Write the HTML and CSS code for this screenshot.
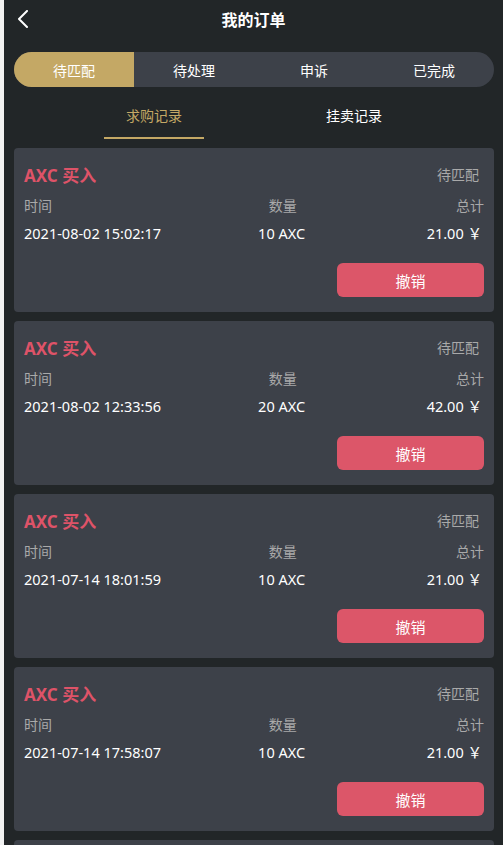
FILE: index.html
```html
<!DOCTYPE html>
<html lang="zh-CN">
<head>
    <meta charset="UTF-8">
    <meta name="viewport" content="width=device-width, initial-scale=1.0">
    <title>我的订单</title>
    <link rel="stylesheet" href="styles.css">
</head>
<body>
    <div class="app">
        <div class="nav-bar">
            <svg class="back-icon" width="12" height="18" viewBox="0 0 12 18">
                <path d="M10 1 L2 9 L10 17" fill="none" stroke="#fff" stroke-width="2" stroke-linecap="round" stroke-linejoin="round"/>
            </svg>
            <h1>我的订单</h1>
        </div>

        <div class="main">
            <div class="status-tabs">
                <div class="status-tab active">待匹配</div>
                <div class="status-tab">待处理</div>
                <div class="status-tab">申诉</div>
                <div class="status-tab">已完成</div>
            </div>

            <div class="sub-tabs">
                <div class="sub-tab active">
                    <span>求购记录</span>
                    <div class="line"></div>
                </div>
                <div class="sub-tab">
                    <span>挂卖记录</span>
                    <div class="line"></div>
                </div>
            </div>

            <div class="order-list">
                <div class="order-card">
                    <div class="order-head">
                        <span class="order-title">AXC 买入</span>
                        <span class="order-status">待匹配</span>
                    </div>
                    <div class="order-row labels">
                        <span class="col-time">时间</span>
                        <span class="col-num">数量</span>
                        <span class="col-total">总计</span>
                    </div>
                    <div class="order-row values">
                        <span class="col-time">2021-08-02 15:02:17</span>
                        <span class="col-num">10 AXC</span>
                        <span class="col-total">21.00 ￥</span>
                    </div>
                    <div class="order-foot">
                        <button class="cancel-btn">撤销</button>
                    </div>
                </div>

                <div class="order-card">
                    <div class="order-head">
                        <span class="order-title">AXC 买入</span>
                        <span class="order-status">待匹配</span>
                    </div>
                    <div class="order-row labels">
                        <span class="col-time">时间</span>
                        <span class="col-num">数量</span>
                        <span class="col-total">总计</span>
                    </div>
                    <div class="order-row values">
                        <span class="col-time">2021-08-02 12:33:56</span>
                        <span class="col-num">20 AXC</span>
                        <span class="col-total">42.00 ￥</span>
                    </div>
                    <div class="order-foot">
                        <button class="cancel-btn">撤销</button>
                    </div>
                </div>

                <div class="order-card">
                    <div class="order-head">
                        <span class="order-title">AXC 买入</span>
                        <span class="order-status">待匹配</span>
                    </div>
                    <div class="order-row labels">
                        <span class="col-time">时间</span>
                        <span class="col-num">数量</span>
                        <span class="col-total">总计</span>
                    </div>
                    <div class="order-row values">
                        <span class="col-time">2021-07-14 18:01:59</span>
                        <span class="col-num">10 AXC</span>
                        <span class="col-total">21.00 ￥</span>
                    </div>
                    <div class="order-foot">
                        <button class="cancel-btn">撤销</button>
                    </div>
                </div>

                <div class="order-card">
                    <div class="order-head">
                        <span class="order-title">AXC 买入</span>
                        <span class="order-status">待匹配</span>
                    </div>
                    <div class="order-row labels">
                        <span class="col-time">时间</span>
                        <span class="col-num">数量</span>
                        <span class="col-total">总计</span>
                    </div>
                    <div class="order-row values">
                        <span class="col-time">2021-07-14 17:58:07</span>
                        <span class="col-num">10 AXC</span>
                        <span class="col-total">21.00 ￥</span>
                    </div>
                    <div class="order-foot">
                        <button class="cancel-btn">撤销</button>
                    </div>
                </div>

                <!-- next card only peeks in at the bottom -->
                <div class="order-card"></div>
            </div>
        </div>
    </div>
</body>
</html>
```

FILE: styles.css
```css
body {
    margin: 0;
    padding: 0;
    background: #f2f2f2;
    font-family: "Noto Sans", "Noto Sans CJK SC", sans-serif;
    overflow: hidden;
}

.app {
    margin-left: 4px;
    min-height: 100vh;
    background: #222628;
    color: #fff;
}

/* header */
.nav-bar {
    position: relative;
    height: 40px;
    display: flex;
    align-items: center;
    justify-content: center;
}

.nav-bar h1 {
    margin: 0;
    font-size: 16px;
    font-weight: bold;
    line-height: 40px;
}

.back-icon {
    position: absolute;
    left: 13px;
    top: 10px;
}

.main {
    padding: 12px 9px 0 10px;
}

/* status tabs */
.status-tabs {
    display: flex;
    height: 35px;
    border-radius: 18px;
    overflow: hidden;
    background: #3d4149;
}

.status-tab {
    flex: 1;
    display: flex;
    align-items: center;
    justify-content: center;
    font-size: 14px;
    color: #fff;
}

.status-tab.active {
    background: #c4a865;
}

/* record tabs */
.sub-tabs {
    display: flex;
    width: 400px;
    margin: 8px auto 0;
}

.sub-tab {
    flex: 1;
    display: flex;
    flex-direction: column;
    align-items: center;
}

.sub-tab span {
    font-size: 14px;
    line-height: 42px;
    color: #fff;
}

.sub-tab .line {
    width: 100px;
    height: 2px;
}

.sub-tab.active span {
    color: #c4a865;
}

.sub-tab.active .line {
    background: #c4a865;
}

/* orders */
.order-list {
    margin-top: 9px;
}

.order-card {
    background: #3d4149;
    border-radius: 4px;
    padding: 14px 10px 15px;
    margin-bottom: 9px;
    min-height: 135px;
}

.order-head {
    display: flex;
    justify-content: space-between;
    align-items: center;
    height: 24px;
}

.order-title {
    font-size: 17px;
    font-weight: bold;
    color: #de5368;
}

.order-status {
    font-size: 14px;
    color: #a9a9a9;
    margin-right: 5px;
}

.order-row {
    display: flex;
    font-size: 14px;
    line-height: 20px;
}

.order-row.labels {
    margin-top: 10px;
    color: #a9a9a9;
}

.order-row.values {
    margin-top: 7px;
    font-size: 14.5px;
    color: #fff;
}

.col-time {
    width: 41.6667%;
}

.col-num {
    width: 29.1667%;
    text-align: center;
}

.col-total {
    width: 29.1667%;
    text-align: right;
}

.order-row.values .col-total {
    padding-right: 2px;
}

.order-foot {
    display: flex;
    justify-content: flex-end;
    margin-top: 20px;
}

.cancel-btn {
    width: 147px;
    height: 34px;
    border: none;
    border-radius: 6px;
    background: #dc5669;
    color: #fff;
    font-family: "Noto Sans CJK SC", sans-serif;
    font-size: 15px;
    padding: 0;
}
```
